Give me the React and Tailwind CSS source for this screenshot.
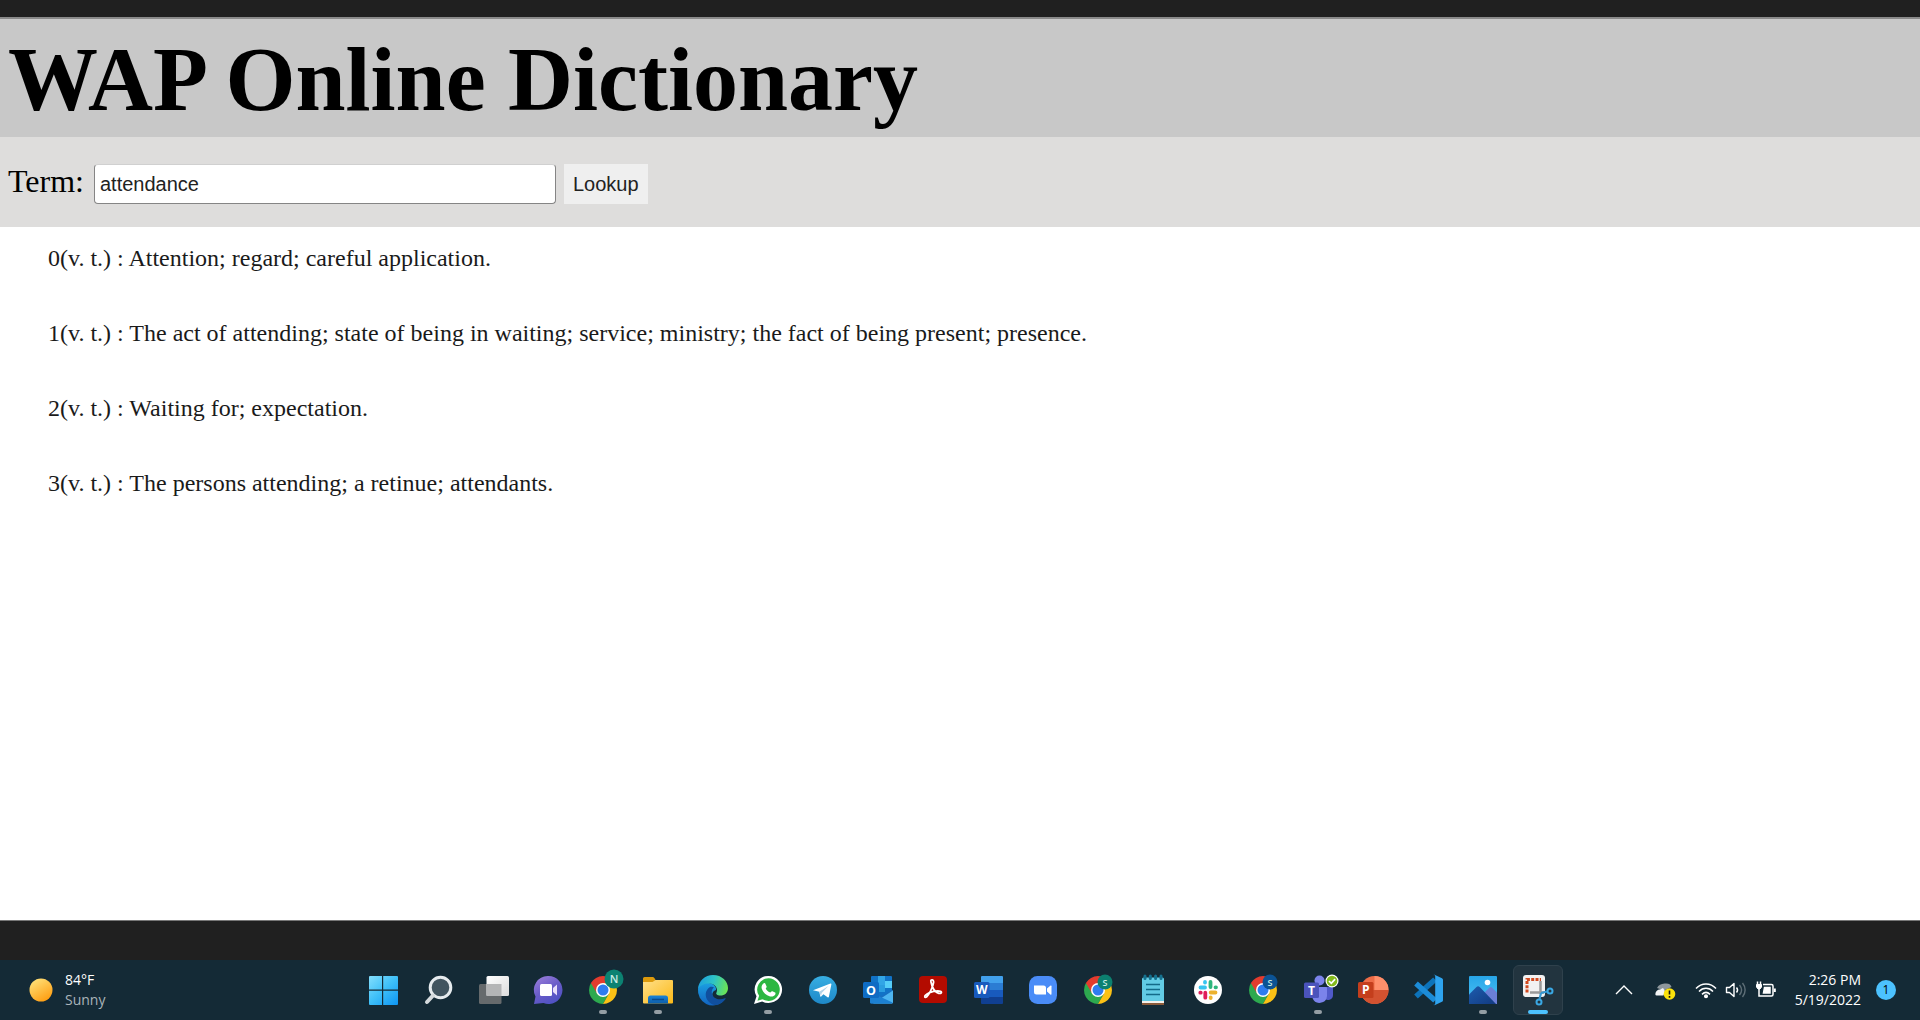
import { useState } from "react";

const DEFINITIONS = [
  "0(v. t.) : Attention; regard; careful application.",
  "1(v. t.) : The act of attending; state of being in waiting; service; ministry; the fact of being present; presence.",
  "2(v. t.) : Waiting for; expectation.",
  "3(v. t.) : The persons attending; a retinue; attendants.",
];

function Icon({ children }) {
  return (
    <svg viewBox="0 0 32 32" className="size-8 overflow-visible" aria-hidden="true">
      {children}
    </svg>
  );
}

function IconText({ x, y, size, fill = "#fff", weight = 700, children }) {
  return (
    <text x={x} y={y} fontSize={size} fill={fill} fontWeight={weight} textAnchor="middle" fontFamily="'Open Sans', sans-serif">
      {children}
    </text>
  );
}

function Windows() {
  return (
    <Icon>
      <defs>
        <linearGradient id="win" gradientUnits="userSpaceOnUse" x1="2" y1="1" x2="30" y2="31">
          <stop offset="0" stopColor="#86e0fd" />
          <stop offset="0.5" stopColor="#3fc0f8" />
          <stop offset="1" stopColor="#0f96f3" />
        </linearGradient>
      </defs>
      <path fill="url(#win)" d="M3 2h12v13.500H2V3a1 1 0 0 1 1-1zM16.200 2H30a1 1 0 0 1 1 1v12.500H16.200zM2 16.800h13V31H3a1 1 0 0 1-1-1zM16.200 16.800H31V30a1 1 0 0 1-1 1H16.200z" />
    </Icon>
  );
}

function Search() {
  return (
    <Icon>
      <circle cx="18.500" cy="13.500" r="10.300" fill="#41545f" stroke="#e6ebee" strokeWidth="3" />
      <path d="M11 21.500L5 28" stroke="#d5dadd" strokeWidth="4" strokeLinecap="round" />
    </Icon>
  );
}

function TaskView() {
  return (
    <Icon>
      <defs>
        <linearGradient id="tv" x1="0" y1="0" x2="1" y2="1">
          <stop offset="0" stopColor="#fff" />
          <stop offset="1" stopColor="#dcdcdc" />
        </linearGradient>
      </defs>
      <rect x="2" y="10" width="22.500" height="20" rx="1.500" fill="#666a6c" />
      <rect x="9.500" y="2" width="22.500" height="20" rx="1.500" fill="url(#tv)" />
      <path d="M9.500 10h15v12h-15z" fill="#b4b5b6" />
    </Icon>
  );
}

function Chat() {
  return (
    <Icon>
      <defs>
        <linearGradient id="chat" x1="0" y1="0" x2="0.600" y2="1">
          <stop offset="0" stopColor="#a082dc" />
          <stop offset="0.550" stopColor="#6a5cc8" />
          <stop offset="1" stopColor="#5052c4" />
        </linearGradient>
      </defs>
      <path fill="url(#chat)" d="M16.500 2a14 14 0 1 1-5 27.100L2 30l1.500-7.500A14 14 0 0 1 16.500 2z" />
      <rect x="8" y="10" width="12" height="12" rx="1.500" fill="#fff" />
      <path d="M21 14l4-3.500v11L21 18z" fill="#e8defa" />
    </Icon>
  );
}

function Chrome({ letter, badge, large }) {
  return (
    <Icon>
      <path fill="#2da94f" d="M3.900 9A14 14 0 0 0 16 30l6-10.500-6-3.500z" />
      <path fill="#e33b2e" d="M16 9h12.100A14 14 0 0 0 3.900 9l6 10.300z" />
      <path fill="#fbc116" d="M16 9h12.100A14 14 0 0 1 16 30l6-10.500z" />
      <circle cx="16" cy="16" r="7" fill="#fff" />
      <circle cx="16" cy="16" r="5.500" fill="#2f7cf0" />
      <circle cx={large ? 27 : 23} cy={large ? 5 : 8} r={large ? 9.5 : 7.5} fill={badge} />
      <IconText x={large ? 27 : 23} y={large ? 9 : 11.500} size={large ? 11 : 9} fill="#c9ebe3" weight={600}>
        {letter}
      </IconText>
    </Icon>
  );
}

function Folder() {
  return (
    <Icon>
      <defs>
        <linearGradient id="fold" x1="0" y1="0" x2="1" y2="1">
          <stop offset="0" stopColor="#ffe08a" />
          <stop offset="1" stopColor="#fbb917" />
        </linearGradient>
        <linearGradient id="foldb" x1="0" y1="0" x2="0" y2="1">
          <stop offset="0" stopColor="#1a83d8" />
          <stop offset="1" stopColor="#0d5ea8" />
        </linearGradient>
      </defs>
      <path fill="#dc9a0c" d="M1 4.500A1.500 1.500 0 0 1 2.500 3h8c1 0 1.500.5 2.500 2L14 7v3H1z" />
      <path fill="url(#fold)" d="M1 8h9.500l3-2H30a1 1 0 0 1 1 1v21.500a1 1 0 0 1-1 1H2a1 1 0 0 1-1-1z" />
      <path fill="url(#foldb)" d="M6 29.500V24a2.500 2.500 0 0 1 2.500-2.500h15A2.500 2.500 0 0 1 26 24v5.500z" />
      <path d="M10 25.500h12" stroke="#0a4a8c" strokeWidth="1.500" />
    </Icon>
  );
}

function Edge() {
  return (
    <Icon>
      <defs>
        <linearGradient id="edgeA" x1="0" y1="0.300" x2="1" y2="0.500">
          <stop offset="0" stopColor="#1c9fe0" />
          <stop offset="0.500" stopColor="#2ec3c6" />
          <stop offset="1" stopColor="#6be455" />
        </linearGradient>
        <linearGradient id="edgeB" x1="0" y1="0" x2="0" y2="1">
          <stop offset="0" stopColor="#1ba0e2" />
          <stop offset="1" stopColor="#1263c0" />
        </linearGradient>
      </defs>
      <path fill="url(#edgeB)" d="M1 15C2 10 7 8 12 9c5 .8 7.500 4 7 7-5 1-5 8 1 11 2 1 4 1.200 6 .6A15 15 0 0 1 1 15z" />
      <path fill="#104f9e" d="M13 13c-5 3-6 10-1 15 3 3 6 3.200 8 3 3.500-.8 6.500-3.300 8.500-6 .5-.7 0-1-.7-.7-6 2.700-12 0-13-5-.4-2.500.5-4.500 2.200-5.800-1-.8-2.600-1-4-.5z" />
      <path fill="url(#edgeA)" d="M1 15C1.500 7 8 1 16 1c9 0 15 6.500 15 13 0 5-3.500 7.500-7.500 7.500-3.500 0-5-1.500-4-3 2-4-1.500-9-7.500-9-5 0-9 2-11 5.500z" />
    </Icon>
  );
}

function WhatsApp() {
  return (
    <Icon>
      <path fill="#fff" d="M16.500 2a13.500 13.500 0 1 1-6.300 25.400L2 30l2.500-7.800A13.500 13.500 0 0 1 16.500 2z" />
      <path fill="#2cb742" d="M16.500 4.300a11.300 11.300 0 1 1-6 20.900l-5 1.500 1.600-4.900A11.300 11.300 0 0 1 16.500 4.300z" />
      <path fill="#fff" d="M11.500 9.500c.6-.6 1.600-.5 1.900.2l1.200 2.700c.2.500 0 1-.9 2 1.200 2.200 2.500 3.300 4.700 4.200.9-1 1.300-1.700 2-1.300l2.700 1.300c.7.400.4 1.500 0 2.200-1 1.500-3 2.200-5 1.600-4.300-1.300-6.700-3.700-8.200-7.400-.8-2-.2-4.100 1.600-5.500z" />
    </Icon>
  );
}

function Telegram() {
  return (
    <Icon>
      <defs>
        <linearGradient id="tg" x1="0" y1="0" x2="0" y2="1">
          <stop offset="0" stopColor="#37aee2" />
          <stop offset="1" stopColor="#1e88c8" />
        </linearGradient>
      </defs>
      <circle cx="16" cy="16" r="14" fill="url(#tg)" />
      <path fill="#fff" d="M6 16.300L23.500 9.500c.6-.2 1 .2.900.8l-2.500 12.500c-.2.700-.7.900-1.300.5l-4.200-3-2.200 2.200c-.5.400-.9.300-1-.4l-.9-4.400z" />
      <path fill="#b5d4e8" d="M12.300 17.700L21.500 12l-6.800 7-.7 3.300z" />
    </Icon>
  );
}

function Outlook() {
  return (
    <Icon>
      <rect x="9" y="2" width="21" height="20" rx="1" fill="#1173c7" />
      <path fill="#32a5e6" d="M16 2h7v9h-7z" />
      <path fill="#55cdf8" d="M23 7h7v7h-7z" />
      <path fill="#2a9de0" d="M16 11h7v7h-7z" />
      <path fill="#1a6fc0" d="M8 18l12 4 11-6v12a1.500 1.500 0 0 1-1.500 1.500h-20A1.500 1.500 0 0 1 8 28z" />
      <path fill="#4db5f0" d="M31 16.500V28a1.500 1.500 0 0 1-1.500 1.500H11z" />
      <path fill="#1c80d2" d="M8 18l22.500 10.500-1 1h-20A1.500 1.500 0 0 1 8 28z" />
      <rect x="1" y="8" width="16" height="16" rx="1.500" fill="#0f6cc4" />
      <IconText x={9} y={20.500} size={12.500}>O</IconText>
    </Icon>
  );
}

function Acrobat() {
  return (
    <Icon>
      <rect x="2" y="2" width="28" height="27" rx="4" fill="#b30b00" />
      <path fill="none" stroke="#fff" strokeWidth="1.800" strokeLinejoin="round" d="M14 8c-1-3 3-3 2.600.5C16 13 12 21 9.500 23c-2 1.200-2.600-1-.2-2.500C13 18 20 16 23.500 17.300c2 1 .5 2.600-1.700 2C18 18 15 13.500 14 8z" />
    </Icon>
  );
}

function Word() {
  return (
    <Icon>
      <path fill="#41a0ec" d="M9 3a1 1 0 0 1 1-1h20a1 1 0 0 1 1 1v6H9z" />
      <path fill="#2b7cd3" d="M9 9h22v7H9z" />
      <path fill="#185abd" d="M9 16h22v7H9z" />
      <path fill="#103f91" d="M9 23h22v6a1 1 0 0 1-1 1H10a1 1 0 0 1-1-1z" />
      <rect x="2" y="8" width="15.500" height="16" rx="1.500" fill="#185abd" />
      <IconText x={9.700} y={20.300} size={12}>W</IconText>
    </Icon>
  );
}

function Zoom() {
  return (
    <Icon>
      <rect x="2" y="2" width="28" height="28" rx="8.500" fill="#4a8cf7" />
      <path fill="#fff" d="M7 11.500h9.500A2.500 2.500 0 0 1 19 14v6.500H9.500A2.500 2.500 0 0 1 7 18z" />
      <path fill="#fff" d="M20 14.500l3.300-2.800c.8-.5 1.200-.3 1.200.6v7.500c0 .9-.4 1.100-1.200.6L20 17.600z" />
    </Icon>
  );
}

function Notepad() {
  return (
    <Icon>
      <path fill="#8a5a3a" d="M5 27h22v4H5z" />
      <path fill="#f4f0ea" d="M5 26h22v3H5z" />
      <path fill="#62cbe4" d="M5 5a1.500 1.500 0 0 1 1.500-1.500h19A1.500 1.500 0 0 1 27 5v22H5z" />
      <path d="M8 2v2.500M13.300 2v2.500M18.600 2v2.500M24 2v2.500" stroke="#14718f" strokeWidth="3" strokeLinecap="round" />
      <path d="M9 10.500h14M9 15.500h14M9 20.500h14" stroke="#136a88" strokeWidth="1.700" />
    </Icon>
  );
}

function Slack() {
  return (
    <Icon>
      <circle cx="16" cy="16" r="14" fill="#fff" />
      <g strokeWidth="3.800" strokeLinecap="round">
        <path d="M8.500 13.500h4.500M13 8v.5" stroke="#36c5f0" />
        <path d="M18.500 8v5M23.500 13.300h.5" stroke="#2eb67d" />
        <path d="M18.700 18.500h4.800M18.700 23.500v.5" stroke="#ecb22e" />
        <path d="M13.300 18.700v5M8.300 18.700h.5" stroke="#e01e5a" />
      </g>
    </Icon>
  );
}

function Teams() {
  return (
    <Icon>
      <circle cx="17.500" cy="6.500" r="5" fill="#7b83eb" />
      <path fill="#5059c9" d="M22 13h8a1 1 0 0 1 1 1v7a5 5 0 0 1-9 3z" />
      <path fill="#7b83eb" d="M11 13h13a1 1 0 0 1 1 1v8a7.500 7.500 0 0 1-14.500 2z" />
      <rect x="2" y="8.500" width="15" height="15.500" rx="1.500" fill="#4b53bc" />
      <IconText x={9.500} y={20.500} size={12}>T</IconText>
      <circle cx="30" cy="7" r="6.500" fill="#fff" />
      <circle cx="30" cy="7" r="5.300" fill="#84ba1c" />
      <path d="M27 7l2.300 2.300 3.800-4.200" stroke="#fff" strokeWidth="1.700" fill="none" />
    </Icon>
  );
}

function PowerPoint() {
  return (
    <Icon>
      <circle cx="17.500" cy="16" r="14" fill="#ed6c47" />
      <path fill="#ff8f6b" d="M17.500 2a14 14 0 0 1 14 14h-14z" />
      <path fill="#d35230" d="M3.500 16h28a14 14 0 0 1-28 0z" />
      <rect x="1" y="8" width="15.500" height="16" rx="1.500" fill="#c43e1c" />
      <IconText x={8.700} y={20.400} size={12}>P</IconText>
    </Icon>
  );
}

function VSCode() {
  return (
    <Icon>
      <path fill="none" stroke="#0d73ba" strokeWidth="5.500" strokeLinejoin="round" d="M4 22.500L23 5.500" />
      <path fill="none" stroke="#1c8cd8" strokeWidth="5.500" strokeLinejoin="round" d="M4 9.500l19 17" />
      <path fill="#2ea4f0" d="M23 1l7 3.200c.6.300 1 .9 1 1.600v20.400c0 .7-.4 1.300-1 1.600L23 31c-.8.300-1.500.1-2-.4 1 .7 2.200.1 2.200-1V2.400c0-1.200-1.400-1.700-2.200-1 .5-.5 1.200-.7 2-.4z" />
    </Icon>
  );
}

function Photos() {
  return (
    <Icon>
      <defs>
        <linearGradient id="ph" x1="0" y1="0" x2="0" y2="1">
          <stop offset="0" stopColor="#27a5e8" />
          <stop offset="1" stopColor="#4fc4f5" />
        </linearGradient>
        <linearGradient id="ph2" x1="0" y1="0" x2="1" y2="1">
          <stop offset="0" stopColor="#1d5cae" />
          <stop offset="1" stopColor="#123a80" />
        </linearGradient>
      </defs>
      <rect x="2" y="2" width="28" height="28" rx="1" fill="url(#ph)" />
      <path fill="#6b7fd7" d="M16 20l6.500-6.500c.8-.7 1.700-.7 2.500 0l5 5V30H16z" />
      <path fill="url(#ph2)" d="M2 20.500l7.500-7.500c1-1 2.200-1 3.200 0L29 30H2z" />
      <circle cx="20.500" cy="8.500" r="2.800" fill="#fff" />
    </Icon>
  );
}

function Snip() {
  return (
    <Icon>
      <rect x="1" y="1" width="22" height="22" rx="3" fill="#f2f2f2" />
      <path d="M5 18.500V5.500h14" fill="none" stroke="#d2491f" strokeWidth="3" strokeDasharray="3 1.300" />
      <path d="M18.500 7v13M8 18.500h14" stroke="#9a9a9a" strokeWidth="2.500" />
      <path d="M19 19l-1.500 6M19 19l6-1.500" stroke="#3497d0" strokeWidth="2.200" />
      <circle cx="17" cy="28" r="2.500" fill="none" stroke="#3aa8e4" strokeWidth="2" />
      <circle cx="28" cy="17" r="2.500" fill="none" stroke="#3aa8e4" strokeWidth="2" />
    </Icon>
  );
}

const APPS = [
  { name: "Start", icon: <Windows /> },
  { name: "Search", icon: <Search /> },
  { name: "Task view", icon: <TaskView /> },
  { name: "Chat", icon: <Chat /> },
  { name: "Chrome, profile N", icon: <Chrome letter="N" badge="#0c8272" large />, running: true },
  { name: "File Explorer", icon: <Folder />, running: true },
  { name: "Edge", icon: <Edge /> },
  { name: "WhatsApp", icon: <WhatsApp />, running: true },
  { name: "Telegram", icon: <Telegram /> },
  { name: "Outlook", icon: <Outlook /> },
  { name: "Acrobat", icon: <Acrobat /> },
  { name: "Word", icon: <Word /> },
  { name: "Zoom", icon: <Zoom /> },
  { name: "Chrome, profile S", icon: <Chrome letter="S" badge="#0c8070" /> },
  { name: "Notepad", icon: <Notepad /> },
  { name: "Slack", icon: <Slack /> },
  { name: "Chrome, second profile S", icon: <Chrome letter="S" badge="#0b5394" /> },
  { name: "Teams", icon: <Teams />, running: true },
  { name: "PowerPoint", icon: <PowerPoint /> },
  { name: "Visual Studio Code", icon: <VSCode /> },
  { name: "Photos", icon: <Photos />, running: true },
  { name: "Snipping Tool", icon: <Snip />, active: true },
];

function AppButton({ app }) {
  return (
    <button
      type="button"
      aria-label={app.name}
      className={
        app.active
          ? "relative flex h-[50px] w-[50px] items-center justify-center rounded-md border border-[#2f414c] bg-[#22343f]"
          : "relative flex h-[50px] w-[50px] items-center justify-center rounded-md"
      }
    >
      {app.icon}
      {app.running && <span className="absolute bottom-px left-1/2 h-1 w-2 -translate-x-1/2 rounded-full bg-[#949ea4]" />}
      {app.active && <span className="absolute bottom-0 left-1/2 h-1 w-5 -translate-x-1/2 rounded-full bg-[#4cc2ff]" />}
    </button>
  );
}

function Tray() {
  return (
    <div className="flex items-center justify-end pr-6">
      <button type="button" aria-label="Show hidden icons" className="mr-[22px]">
        <svg viewBox="0 0 16 16" className="size-4 overflow-visible" fill="none" stroke="#fff" strokeWidth="1.400">
          <path d="M0 12l8-8 8 8" />
        </svg>
      </button>
      <svg viewBox="0 0 22 20" className="mr-5 h-5 w-[22px] overflow-visible">
        <path d="M3 8c1.500-3 4-4 7.500-4.500 4-.5 6 .5 7 3.500L10 10.500z" fill="#8e979c" />
        <path d="M1.500 15C1 12 3 9.500 6 9.500l3-1.500 2 3-1.500 4.500h-7c-.5 0-.9-.2-1-.5z" fill="#f2f4f5" />
        <circle cx="15.500" cy="14" r="5.800" fill="#fbe20c" />
        <path d="M15.500 10.500v4M15.500 16v1.700" stroke="#111" strokeWidth="1.600" />
      </svg>
      <svg viewBox="0 0 20 20" className="mr-2.5 size-5 overflow-visible" fill="none" stroke="#fff" strokeWidth="1.500">
        <path d="M0 8.500c5.500-6 14.500-6 20 0M3 11.500c4-4.300 10-4.300 14 0M6 14.400c2.500-2.500 5.500-2.500 8 0" />
        <circle cx="10" cy="16.200" r="1.300" fill="#fff" />
      </svg>
      <svg viewBox="0 0 20 20" className="mr-2.5 size-5 overflow-visible" fill="none" stroke="#fff" strokeWidth="1.400">
        <path d="M.5 7.500h3L8 3.500v13l-4.500-4h-3z" strokeLinejoin="round" />
        <path d="M10.500 7.500c1.300 1.500 1.300 3.500 0 5" />
        <path d="M13.500 5c2.500 3 2.500 7 0 10M16.500 3c3.500 4.200 3.500 9.800 0 14" stroke="#5e6e77" />
      </svg>
      <svg viewBox="0 0 20 20" className="mr-[19px] size-5 overflow-visible" fill="none" stroke="#fff" strokeWidth="1.500">
        <path d="M7 4.500h8.500A1.500 1.500 0 0 1 17 6v8.500a1.500 1.500 0 0 1-1.500 1.500H6" />
        <path d="M8.500 7.500h5.500v5.500H7.500z" fill="#fff" />
        <path d="M18.800 8.500v3.500" strokeWidth="2" />
        <path d="M1.500 1.500v3M4.500 1.500v3M3 8v8h3" />
        <path d="M.5 4.500h5V7L4 9H2L.5 7z" fill="#fff" strokeWidth="1" />
      </svg>
      <button type="button" className="mr-[15px] text-right text-sm leading-5 text-white">
        <span className="block">2:26 PM</span>
        <span className="block">5/19/2022</span>
      </button>
      <button type="button" aria-label="1 notification" className="flex size-5 items-center justify-center rounded-full bg-[#4cc2ff] text-xs text-black">
        1
      </button>
    </div>
  );
}

export default function App() {
  const [term, setTerm] = useState("attendance");
  return (
    <div className="flex min-h-screen flex-col bg-[#202020] pt-[17px] font-['Liberation_Serif',serif] text-black">
      <div className="flex grow flex-col bg-white">
        <header className="border-t-2 border-[#8a8a8a] bg-[#c8c8c8] px-2 pt-4 pb-3">
          <h1 className="text-[90px] leading-[90px] font-bold">WAP Online Dictionary</h1>
        </header>
        <form className="flex h-[90px] items-center gap-2 bg-[#dedddc] px-2 pt-1" onSubmit={(e) => e.preventDefault()}>
          <label htmlFor="term" className="pr-0.5 pb-1.5 text-[32px] leading-10">Term:</label>
          <input
            id="term"
            type="text"
            value={term}
            onChange={(e) => setTerm(e.target.value)}
            className="h-10 w-[462px] rounded-sm border border-[#858585] border-t-[#d0d0d0] bg-white px-[5px] font-['Liberation_Sans',sans-serif] text-xl text-[#222]"
          />
          <button type="submit" className="h-10 bg-[#efefef] px-[9px] font-['Liberation_Sans',sans-serif] text-xl text-[#222]">
            Lookup
          </button>
        </form>
        <ul className="flex flex-col gap-[45px] px-12 pt-4 text-2xl leading-[30px] text-[#1a1a1a]">
          {DEFINITIONS.map((text) => (
            <li key={text}>{text}</li>
          ))}
        </ul>
      </div>
      <footer className="border-t border-[#777] pt-[39px] font-['Open_Sans',sans-serif]">
        <nav className="grid h-[60px] grid-cols-[1fr_auto_1fr] bg-[#142a36]" aria-label="Taskbar">
          <div className="flex items-center gap-3 pl-[29px]">
            <svg viewBox="0 0 24 24" className="size-6" aria-hidden="true">
              <defs>
                <linearGradient id="sun" x1="0.200" y1="0" x2="0.800" y2="1">
                  <stop offset="0" stopColor="#ffe27a" />
                  <stop offset="1" stopColor="#ff9a0c" />
                </linearGradient>
              </defs>
              <circle cx="12" cy="12" r="11.500" fill="url(#sun)" />
            </svg>
            <div className="text-sm leading-5 text-white">
              <p>84°F</p>
              <p className="text-[#aab4ba]">Sunny</p>
            </div>
          </div>
          <div className="flex items-center gap-[5px]">
            {APPS.map((app) => (
              <AppButton key={app.name} app={app} />
            ))}
          </div>
          <Tray />
        </nav>
      </footer>
    </div>
  );
}
